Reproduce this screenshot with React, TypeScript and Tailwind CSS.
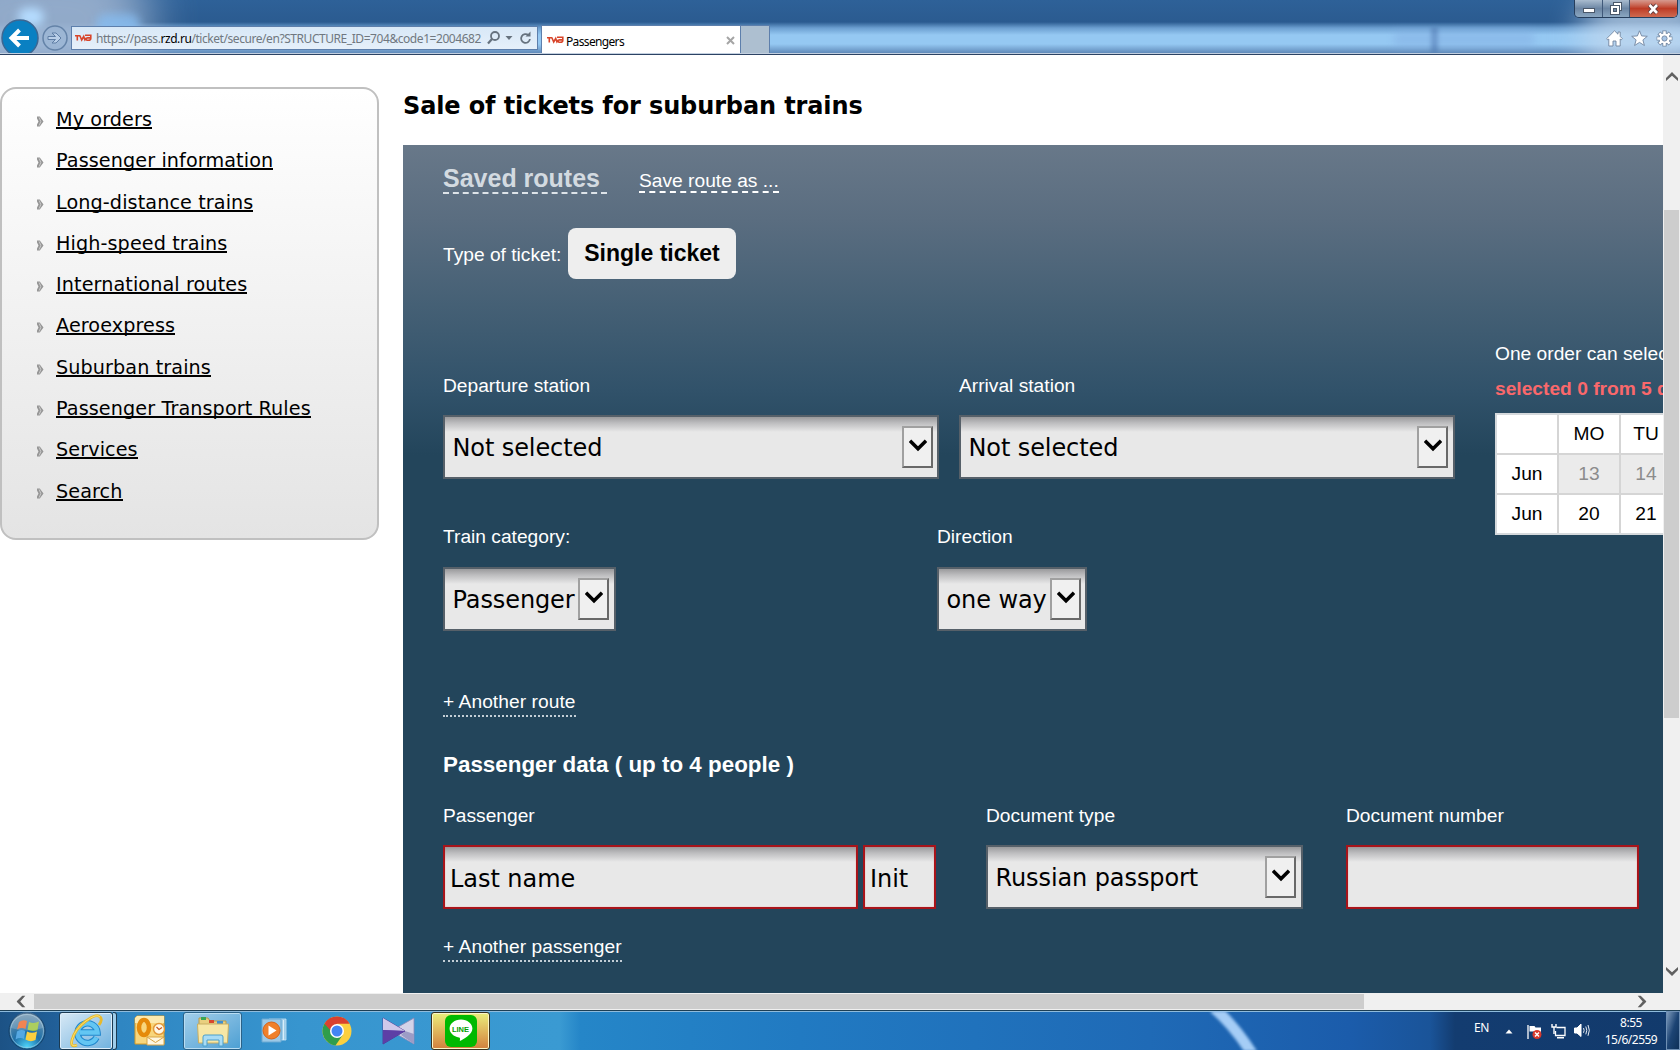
import React, { useState } from "react";

const menuItems = [
  "My orders",
  "Passenger information",
  "Long-distance trains",
  "High-speed trains",
  "International routes",
  "Aeroexpress",
  "Suburban trains",
  "Passenger Transport Rules",
  "Services",
  "Search",
];

const calendarRows = [
  { month: "", days: ["MO", "TU"], disabled: false },
  { month: "Jun", days: ["13", "14"], disabled: true },
  { month: "Jun", days: ["20", "21"], disabled: false },
];

const RzdLogo = () => (
  <svg width="17" height="8" viewBox="0 0 17 8" fill="none" stroke="#d8452a" strokeWidth="1.6">
    <path d="M0 1.800h5.400M2.300 1.800v4.800M5 2l1.700 4 2-3.500 1.200 3.300 1.300-1.800M10 1.200h5.800v3q0 2-2.200 2h-1.600q-1-.2-.8-1.300.2-1 1.300-1h3" />
  </svg>
);

const CaptionButtons = () => (
  <div className="flex h-[18px] w-[104px] overflow-hidden rounded-b-[5px] border border-t-0 border-[#263e5c] text-white">
    <div className="flex w-[28px] items-center justify-center border-r border-[#40597a] bg-linear-to-b from-[#a9bccf] via-[#6c86a4] to-[#8ba7c1]">
      <svg width="12" height="5" viewBox="0 0 12 5" className="mt-1">
        <rect x="0.5" y="0.5" width="11" height="4" fill="white" stroke="#4a586a" />
      </svg>
    </div>
    <div className="flex w-[27px] items-center justify-center border-r border-[#40597a] bg-linear-to-b from-[#a9bccf] via-[#6c86a4] to-[#8ba7c1]">
      <svg width="13" height="13" viewBox="0 0 13 13" fill="white" stroke="#4a586a">
        <rect x="3.5" y="0.5" width="8" height="8" />
        <rect x="0.5" y="3.5" width="9" height="9" />
        <rect x="3.5" y="6.5" width="3" height="3" fill="#7088a3" />
      </svg>
    </div>
    <div className="flex flex-1 items-center justify-center bg-linear-to-b from-[#d69a8f] via-[#bd3b25] to-[#cf6a50]">
      <svg width="13" height="12" viewBox="0 0 13 12" fill="none">
        <path d="M2.5 2 10 10M10 2 2.5 10" stroke="#5c3a3c" strokeWidth="4.6" />
        <path d="M2.5 2 10 10M10 2 2.5 10" stroke="white" strokeWidth="2.6" />
      </svg>
    </div>
  </div>
);

const ToolIcons = () => (
  <div className="flex items-center gap-[8px]">
    <svg width="17" height="17" viewBox="0 0 17 17" fill="white" stroke="#71859f" strokeWidth="0.9">
      <path d="M8.500.8 12 4.200V2h2.200v4.400L16.400 8.700l-1.200 1.200-1-.9V16H10v-5H7v5H2.800V9l-1 .9L.6 8.700Z" />
    </svg>
    <svg width="17" height="17" viewBox="0 0 17 17" fill="white" stroke="#71859f" strokeWidth="0.9">
      <path d="m8.500.8 2.100 5.100 5.700.4-4.400 3.600 1.500 5.600-4.900-3.100-4.900 3.100 1.500-5.600L.7 6.300l5.700-.4Z" />
    </svg>
    <svg width="17" height="17" viewBox="0 0 17 17">
      <g stroke="#71859f" strokeWidth="4.2">
        <path d="M8.500.6v15.800M.6 8.500h15.800M2.900 2.900l11.200 11.200M14.100 2.900 2.900 14.100" />
      </g>
      <circle cx="8.500" cy="8.500" r="5.800" fill="#71859f" />
      <g stroke="white" strokeWidth="2.5">
        <path d="M8.500 1.200v14.600M1.200 8.500h14.600M3.400 3.400l10.200 10.200M13.600 3.400 3.400 13.600" />
      </g>
      <circle cx="8.500" cy="8.500" r="5.100" fill="white" />
      <circle cx="8.500" cy="8.500" r="2.600" fill="#a8c6e6" stroke="#71859f" strokeWidth="0.9" />
    </svg>
  </div>
);

const BrowserBar = () => (
  <header className="relative h-[55px] overflow-hidden bg-[linear-gradient(to_bottom,#2e6198_0,#2b5b90_22px,#6c9fd0_28px,#95c8f2_35px,#95c8f2_44px,#5b84b4_54px)]">
    {/* glass highlights */}
    <div className="absolute -left-[60px] -top-[50px] h-[140px] w-[210px] rounded-full bg-[#9db3d0] opacity-90 blur-xl"></div>
    <div className="absolute left-[18px] top-[8px] h-[18px] w-[26px] rounded-full bg-[#b5dcff] blur-[5px]"></div>
    <div className="absolute left-[96px] top-[14px] h-[22px] w-[44px] rounded-full bg-[#86bcf0] opacity-80 blur-[4px]"></div>
    <div className="absolute right-[-30px] top-[-10px] h-[90px] w-[130px] rounded-full bg-[#c5d9ee] opacity-70 blur-lg"></div>
    <div className="absolute left-[1431px] top-[27px] h-[26px] w-[7px] bg-[#4d78ae] opacity-70 blur-[2px]"></div>
    <div className="absolute left-[1394px] top-[31px] h-[16px] w-[140px] bg-[#7fa9e0] opacity-40 blur-[4px]"></div>
    <div className="absolute right-[2px] top-0">
      <CaptionButtons />
    </div>
    <div className="relative flex h-[53px] items-start overflow-hidden">
      <div className="mt-[19px] flex w-[71px] items-start">
        <svg width="71" height="38" viewBox="0 0 71 38">
          <circle cx="20" cy="19" r="18" fill="#0a80c2" stroke="#3c6793" strokeWidth="1.500" />
          <path d="M29 19H12.500M19.500 11 11.500 19l8 8" fill="none" stroke="white" strokeWidth="4" />
          <circle cx="55" cy="19" r="12" fill="#9db9d8" fillOpacity="0.4" stroke="#6483a8" strokeWidth="1.500" />
          <path d="M48 17.500h7.500L52 14h4l5 5-5 5h-4l3.500-3.500H48Z" fill="#b9cfe8" stroke="#5f7ea5" />
        </svg>
      </div>
      <div className="mt-[26px] flex h-[24px] w-[467px] items-center border border-[#5d7fac] bg-linear-to-b from-[#d8e8f7] to-[#e6f0fa] pl-[3px]">
        <RzdLogo />
        <p className="ml-[4px] mt-[2px] w-[387px] overflow-hidden whitespace-nowrap font-['Noto_Sans'] text-[12px] leading-5 tracking-[-0.44px] text-[#707880]">
          https://pass.<span className="text-black">rzd.ru</span>/ticket/secure/en?STRUCTURE_ID=704&amp;code1=2004682
        </p>
        <svg width="50" height="16" viewBox="0 0 50 16" className="ml-1" fill="none" stroke="#66727e">
          <circle cx="8" cy="6" r="4" strokeWidth="1.800" />
          <path d="M5 9 1 13.500" strokeWidth="2.200" />
          <path d="M18.500 6h7l-3.500 4Z" fill="#66727e" stroke="none" />
          <path d="M41.500 5.200A4.400 4.400 0 1 0 42.900 9" strokeWidth="1.800" />
          <path d="M38.500 6.500h5v-5Z" fill="#66727e" stroke="none" />
        </svg>
      </div>
      <div className="ml-[3px] mt-[25px] flex h-[29px] w-[200px] items-center border border-b-0 border-[#5d7fac] bg-white pl-[5px]">
        <RzdLogo />
        <span className="ml-[2px] mt-[3px] font-['Noto_Sans'] text-[12px] leading-5 tracking-[-0.65px] text-black">Passengers</span>
        <svg width="9" height="9" viewBox="0 0 9 9" className="ml-auto mr-[5px]">
          <path d="m1 1 7 7M8 1 1 8" stroke="#a5a5a5" strokeWidth="2" />
        </svg>
      </div>
      <div className="mt-[25px] h-[29px] w-[29px] border border-l-0 border-b-0 border-[#5d7fac] bg-[#adbfd0]"></div>
      <div className="ml-auto mr-[7px] mt-[30px]">
        <ToolIcons />
      </div>
    </div>
    <div className="relative h-px bg-[#c3d0e0]"></div>
    <div className="relative h-px bg-[#2c4364]"></div>
  </header>
);

const Sidebar = () => (
  <aside className="mt-[32px] h-[453px] w-[379px] shrink-0 rounded-[16px] border-2 border-[#c0c0c0] bg-linear-to-b from-white to-[#e4e4e4] pl-[35px] pt-[10px]">
    <ul>
      {menuItems.map((item) => (
        <li key={item} className="flex h-[41.3px] items-start">
          <svg width="7" height="11" viewBox="0 0 7 11" className="mt-[17px]">
            <path d="M0 .5h2.800L6.500 5.500 2.800 10.500H0V8.500L1.500 5.500 0 2.500Z" fill="#969696" />
            <path d="M2.200 1.500 3.800 5.500 2.200 9.500" fill="none" stroke="#d0d0d0" strokeWidth="0.9" />
          </svg>
          <a
            href="#"
            className="ml-[12px] mt-[6px] box-content h-[22px] whitespace-nowrap border-b-2 border-black text-[19.2px] leading-[30px] tracking-[0.1px] text-black"
          >
            {item}
          </a>
        </li>
      ))}
    </ul>
  </aside>
);

const SelectBox = ({ value, className }: { value: string; className: string }) => (
  <div
    className={
      "flex h-16 items-start border-2 border-[#566069] bg-[#e8e8e8] bg-[linear-gradient(to_bottom,#9a9a9c,#bdbdbf_6px,#e8e8e8_15px)] pl-[7.5px] font-['Verdana','DejaVu_Sans',sans-serif] text-black " +
      className
    }
  >
    <span className="whitespace-nowrap text-[24px] leading-[62px] tracking-[-0.1px]">{value}</span>
    <div className="ml-auto mt-[9px] flex h-[42px] w-[31px] shrink-0 justify-center border-2 border-b-[#696969] border-l-[#a0a0a0] border-r-[#696969] border-t-[#a0a0a0] bg-[#f0f0f0] pt-[10px]">
      <svg width="18" height="14" viewBox="0 0 18 14" fill="none">
        <path d="M1 2.700 9 10.700l8-8" stroke="black" strokeWidth="3.500" />
      </svg>
    </div>
  </div>
);

const TextField = ({ value, className }: { value: string; className: string }) => {
  const [text, setText] = useState(value);

  return (
    <input
      type="text"
      value={text}
      onChange={(e) => setText(e.target.value)}
      className={
        "h-16 border-2 border-[#a8141a] bg-[#e8e8e8] bg-[linear-gradient(to_bottom,#9a9a9c,#bdbdbf_6px,#e8e8e8_15px)] pl-[5px] pt-[3px] font-['Verdana','DejaVu_Sans',sans-serif] text-[24px] tracking-[-0.05px] text-black shadow-[inset_0_0_1px_#ff5a5a] focus:outline-none " +
        className
      }
    />
  );
};

const Calendar = () => (
  <div className="ml-10 w-[360px] shrink-0">
    <p className="mt-px h-6 whitespace-nowrap leading-6">One order can select up to 5 dates</p>
    <p className="mt-[11px] h-6 whitespace-nowrap font-bold leading-6 text-[#fa686b]">selected 0 from 5 dates</p>
    <div className="mt-3 flex w-[360px] flex-col gap-[2px] border-2 border-[#d5d9dc] bg-[#d5d5d5] text-center text-black">
      {calendarRows.map((row, i) => (
        <div key={i} className="flex h-[38px] gap-[2px] leading-[37px]">
          <div className="w-[60px] bg-white">{row.month}</div>
          {row.days.map((day, j) => (
            <div
              key={day}
              className={
                (j === 0 ? "w-[60px] " : "w-[50px] ") + (row.disabled ? "bg-[#ebebeb] text-[#8c8c8c]" : "bg-white")
              }
            >
              {day}
            </div>
          ))}
        </div>
      ))}
    </div>
  </div>
);

const OrderForm = () => (
  <div className="h-[848px] w-[1500px] bg-[#23455b] bg-[linear-gradient(to_bottom,#687889_0,#5a6d80_75px,#456075_160px,#31526a_245px,#23455b_310px)] px-10 pt-[19px] font-['Liberation_Sans',Arial,sans-serif] text-[19.2px] text-white">
    <div className="flex h-[30px] items-start">
      <a
        href="#"
        className="w-[164px] border-b-2 border-dashed border-[#dde3e8] text-[25px] font-bold leading-[28px] text-[#d3dae0]"
      >
        Saved routes
      </a>
      <a href="#" className="ml-8 mt-[5px] box-content h-[22px] border-b-2 border-dashed border-white leading-6">
        Save route as ...
      </a>
    </div>
    <div className="mt-[34px] flex h-[51px]">
      <span className="mt-[15px] w-[125px] leading-6">Type of ticket:</span>
      <button className="w-[168px] rounded-lg bg-[#eeeeee] pb-px text-[23px] font-bold leading-[50px] text-black">
        Single ticket
      </button>
    </div>
    <div className="mt-[62px] flex items-start">
      <div className="w-[1012px] shrink-0 pt-[33px]">
        <div className="flex gap-5">
          <div>
            <p className="mb-[17px] leading-6">Departure station</p>
            <SelectBox value="Not selected" className="w-[496px] pr-[4px]" />
          </div>
          <div>
            <p className="mb-[17px] leading-6">Arrival station</p>
            <SelectBox value="Not selected" className="w-[496px] pr-[5px]" />
          </div>
        </div>
        <div className="mt-[46px] flex">
          <div className="w-[494px]">
            <p className="mb-[18px] leading-6">Train category:</p>
            <SelectBox value="Passenger" className="w-[173px] pr-[5px]" />
          </div>
          <div>
            <p className="mb-[18px] leading-6">Direction</p>
            <SelectBox value="one way" className="w-[150px] pr-[4px]" />
          </div>
        </div>
      </div>
      <Calendar />
    </div>
    <div className="mt-[59px] flex">
      <a href="#" className="h-[27px] border-b-2 border-dotted border-[#c3ced6] leading-6 tracking-[0.05px]">
        + Another route
      </a>
    </div>
    <h2 className="mt-[34px] text-[22.4px] font-bold leading-7">Passenger data ( up to 4 people )</h2>
    <div className="mt-[25px] flex">
      <div className="w-[543px]">
        <p className="mb-[17px] leading-6">Passenger</p>
        <div className="flex gap-[5px]">
          <TextField value="Last name" className="w-[415px]" />
          <TextField value="Init" className="w-[73px]" />
        </div>
      </div>
      <div className="w-[360px]">
        <p className="mb-[17px] leading-6">Document type</p>
        <SelectBox value="Russian passport" className="w-[317px] pr-[5px]" />
      </div>
      <div>
        <p className="mb-[17px] leading-6">Document number</p>
        <TextField value="" className="w-[293px]" />
      </div>
    </div>
    <div className="mt-[26px] flex">
      <a href="#" className="h-[27px] border-b-2 border-dotted border-[#c3ced6] leading-6 tracking-[0.05px]">
        + Another passenger
      </a>
    </div>
  </div>
);

const TaskbarIcons = () => (
  <div className="flex h-full items-center">
    <svg width="40" height="40" viewBox="0 0 40 40" className="ml-[7px]">
      <defs>
        <radialGradient id="orb" cx="0.5" cy="0.95" r="0.9">
          <stop offset="0" stopColor="#4fd6fb" />
          <stop offset="0.45" stopColor="#1d6fa8" />
          <stop offset="1" stopColor="#6e93ae" />
        </radialGradient>
      </defs>
      <circle cx="20" cy="20" r="18" fill="url(#orb)" stroke="#143f67" />
      <circle cx="20" cy="20" r="16.500" fill="none" stroke="#a8cbe0" strokeOpacity="0.6" />
      <path d="M12 11q4-3 8-1l-1.500 8q-4-2-8.500.5Z" fill="#ef6a2c" />
      <path d="M22 11q5 2 10-.5L30.500 19q-5 2-10-.5Z" fill="#9ac43c" />
      <path d="M10 20.500q4-2.500 8.300-.5L17 28q-4-2-8.500.5Z" fill="#56a8e2" />
      <path d="M20 20.500q5 2.500 10 0L28.500 29q-5 2.500-10-.5Z" fill="#fbcf3f" />
      <path d="M4 17A16 16 0 0 1 36 17Q20 22 4 17Z" fill="white" fillOpacity="0.18" />
    </svg>
    <div className="ml-[12px] flex h-[38px] w-[54px] items-center justify-center rounded-[3px] border border-[#1b3a52] bg-linear-to-br from-[#d8e9f5] to-[#6fb2df] shadow-[inset_0_0_0_1px_#ddeefb]">
      <svg width="34" height="34" viewBox="0 0 34 34" fill="none">
        <path d="M27.500 23.500A10 9.800 0 1 1 28.500 18.500H11" stroke="#1f86cc" strokeWidth="6.500" />
        <path d="M27.500 23.500A10 9.800 0 1 1 28.500 18.500H11" stroke="#63c6f3" strokeWidth="4.500" />
        <path d="M8 31Q1 34 3 26 6 15 17 7t14-4q3 2-1 8" stroke="#e8b92c" strokeWidth="2.800" />
        <path d="M8 31Q1 34 3 26 6 15 17 7t14-4" stroke="#fbe274" strokeWidth="1" />
      </svg>
    </div>
    <div className="h-[38px] w-[4px] rounded-r-[3px] border border-l-0 border-[#1b3a52] bg-[#9fcdea]"></div>
    <svg width="31" height="31" viewBox="0 0 31 31" className="ml-[17px]">
      <path d="M3 1h27v28H1V3Z" fill="#f8d67c" stroke="#d79a22" />
      <path d="M3 1h27v7H1V3Z" fill="#fce9ae" />
      <ellipse cx="10" cy="12.500" rx="5" ry="7.500" fill="none" stroke="#e58a0a" strokeWidth="4.500" />
      <path d="M13 22h17v8H13Z" fill="#fff7e0" stroke="#d9a544" />
      <path d="m13 22 8.500 5.500 8.500-5.500" fill="none" stroke="#d9a544" />
      <circle cx="25" cy="14" r="5.500" fill="#fff8e6" stroke="#e39a3a" strokeWidth="1.500" />
      <path d="m22.500 12 2.500 2.500 3-2" fill="none" stroke="#c8551b" strokeWidth="1.200" />
    </svg>
    <div className="ml-[18px] flex h-[38px] w-[59px] items-center justify-center rounded-[3px] border border-[#2b6288] bg-linear-to-br from-[#a3cfea] to-[#4a9fd3] shadow-[inset_0_0_0_1px_#b8ddf3]">
      <svg width="34" height="32" viewBox="0 0 34 32">
        <path d="M3 3h9l2 3h16v20H3Z" fill="#e9cf7f" stroke="#b99b4d" />
        <path d="M5 2h5v3H5Z" fill="#3aa655" />
        <path d="M13 5h5v3h-5Z" fill="#d9482e" />
        <path d="M21 6h6v3h-6Z" fill="#3f8fd2" />
        <path d="M1.500 9h31l-1 19h-29Z" fill="#f7e7a6" stroke="#c9ae62" />
        <path d="M7 31v-9q0-2 2-2h16q2 0 2 2v9h-4v-6H11v6Z" fill="#a9dcf5" stroke="#4b9fcb" />
      </svg>
    </div>
    <svg width="26" height="26" viewBox="0 0 26 26" className="ml-[19px]">
      <path d="M8 1h17v21H8Z" fill="#8fc3e4" stroke="#c9e5f5" strokeWidth="0.800" />
      <path d="M1 1h19v23H1Z" fill="#9cc9e7" stroke="#6ba9d2" />
      <path d="M22.500 2v20" stroke="#d9eefa" strokeWidth="1.500" />
      <circle cx="10.500" cy="12.500" r="8.500" fill="#f0802b" stroke="#d6641a" />
      <path d="m7.500 7.500 8 5-8 5Z" fill="white" />
    </svg>
    <svg width="30" height="30" viewBox="0 0 30 30" className="ml-[35px]">
      <circle cx="15" cy="15" r="14.500" fill="#fcd03f" />
      <path d="M2.440 7.750A14.500 14.500 0 0 0 13.500 29.420L21 18.500 15 15Z" fill="#2f9d4c" />
      <path d="M2.440 7.750 9 19 15 15Z" fill="#2f9d4c" />
      <path d="M2.440 7.750A14.500 14.500 0 0 1 27.560 7.750H15L9 15Z" fill="#d9412f" />
      <circle cx="15" cy="15" r="7" fill="white" />
      <circle cx="15" cy="15" r="5.500" fill="#4285f4" />
    </svg>
    <svg width="33" height="28" viewBox="0 0 33 28" className="ml-[30px]">
      <path d="M32 1v26L9 14Z" fill="#d3d3e8" stroke="#8a88b8" strokeWidth="0.800" />
      <path d="m32 27-13-9 4-4 9 3Z" fill="#9c9cc6" />
      <path d="M1 1v26l22-13Z" fill="#6a4fb0" stroke="#4a3390" strokeWidth="0.800" />
      <path d="M1 1v12l22 1Z" fill="#cfc8ea" />
      <path d="M1 27V13l22 1Z" fill="#5d3fa6" />
    </svg>
    <div className="ml-[16px] flex h-[38px] w-[59px] items-center justify-center rounded-[3px] border border-[#3a3320] bg-linear-to-b from-[#e9ee7c] to-[#d07f3d] shadow-[inset_0_0_0_1px_#fbf6c8]">
      <div className="relative flex h-8 w-8 items-center justify-center rounded-[6px] bg-[#00b900]">
        <svg width="24" height="23" viewBox="0 0 24 23" fill="white">
          <path d="M12 .5C5.700.5.600 4.500.600 9.500c0 4.500 4 8.200 9.400 8.900 1.300.2 1.100 1.400.800 3.600 4-2 12.600-6.600 12.600-12.500 0-5-5.100-9-11.400-9Z" />
        </svg>
        <span className="absolute top-[10px] w-full text-center font-['Liberation_Sans',sans-serif] text-[7.5px] font-bold leading-[9px] text-[#00a000]">
          LINE
        </span>
      </div>
    </div>
  </div>
);

const Tray = () => (
  <div className="flex h-full items-start font-['Noto_Sans'] text-[12px] text-white">
    <span className="mt-[8px] w-[34px] pl-[3px] leading-[18px] tracking-[-0.4px]">EN</span>
    <svg width="8" height="5" viewBox="0 0 8 5" className="mt-[18px]">
      <path d="M4 .5 7.500 4.500H.5Z" fill="white" />
    </svg>
    <svg width="15" height="16" viewBox="0 0 15 16" className="ml-[14px] mt-[13px]">
      <path d="M1 1v14" stroke="white" strokeWidth="1.300" />
      <path d="M2.500 2h5l1 1.500H14V9H8L7 7.500H2.500Z" fill="white" />
      <circle cx="10" cy="10.500" r="4.500" fill="#d8382c" />
      <path d="m8 8.500 4 4M12 8.500l-4 4" stroke="white" strokeWidth="1.400" />
    </svg>
    <svg width="15" height="16" viewBox="0 0 15 16" className="ml-[9px] mt-[12px]" fill="none" stroke="white">
      <path d="M5.500 4.500H14v8H4.500V8" strokeWidth="1.300" />
      <path d="M1 1v3h4V1M3 4v7M6 14.800h7" strokeWidth="1.400" />
    </svg>
    <svg width="16" height="15" viewBox="0 0 16 15" className="ml-[8px] mt-[12px]" fill="none" stroke="white">
      <path d="M.5 5H3l4-4v12.500L3 10H.5Z" fill="white" />
      <path d="M9.500 5q1.300 2.300 0 4.800M11.800 3.500q2 3.800 0 7.800M14 2q2.600 5.300 0 10.800" strokeWidth="0.900" />
    </svg>
    <div className="ml-[11px] mt-[3px] w-[60px] whitespace-nowrap text-center text-[12px] leading-[17px] tracking-[-0.5px]">
      <p>8:55</p>
      <p>15/6/2559</p>
    </div>
    <div className="ml-[5px] h-full w-[14px] border border-[#6e8fb4] bg-linear-to-br from-[#7e9bbb] via-[#1c4474] to-[#0e3058]"></div>
  </div>
);

const Taskbar = () => (
  <footer className="relative h-[40px] overflow-hidden border-t border-[#1d3f55] bg-[linear-gradient(to_right,#1c5285_0,#215f98_55px,#2f86c2_120px,#3795cf_300px,#3a9ad2_560px,#2586c8_580px,#217ac2_800px,#1f6ab6_1150px,#1b5cab_1350px,#1a5499_1430px,#133c70_1455px,#123a6c_100%)]">
    <div className="absolute left-0 top-0 h-px w-full bg-[#8ebbdc]"></div>
    <svg width="70" height="40" viewBox="0 0 70 40" className="absolute left-[1200px] top-0 blur-[1.5px]">
      <path d="M14-3Q34 14 53 44" fill="none" stroke="#a5cdf6" strokeWidth="11" />
    </svg>
    <div className="relative flex h-full justify-between">
      <TaskbarIcons />
      <Tray />
    </div>
  </footer>
);

const Chevron = ({ className }: { className: string }) => (
  <svg width="12" height="9" viewBox="0 0 12 9" className={className}>
    <path d="M6 0 12 6v3L6 3.800 0 9V6Z" fill="#606060" />
  </svg>
);

const App = () => {
  return (
    <div className="flex h-[1050px] w-[1680px] flex-col overflow-hidden bg-white font-['Verdana','DejaVu_Sans',sans-serif]">
      <BrowserBar />
      <div className="flex h-[938px]">
        <div className="flex w-[1663px] overflow-hidden">
          <Sidebar />
          <main className="ml-6 shrink-0">
            <h1 className="h-[90px] whitespace-nowrap pt-[36px] text-[24px] font-bold leading-[30px] tracking-[-0.12px] text-black">
              Sale of tickets for suburban trains
            </h1>
            <OrderForm />
          </main>
        </div>
        <div className="flex w-[17px] flex-col items-center bg-[#f0f0f0]">
          <Chevron className="mt-[17px]" />
          <div className="mt-[129px] h-[508px] w-[15px] bg-[#cdcdcd]"></div>
          <Chevron className="mt-[249px] rotate-180" />
        </div>
      </div>
      <div className="flex h-[17px] items-center bg-[#f0f0f0]">
        <Chevron className="ml-[15px] -rotate-90" />
        <div className="ml-[7px] h-[15px] w-[1330px] bg-[#cdcdcd]"></div>
        <Chevron className="ml-[272px] rotate-90" />
      </div>
      <Taskbar />
    </div>
  );
};

export default App;
